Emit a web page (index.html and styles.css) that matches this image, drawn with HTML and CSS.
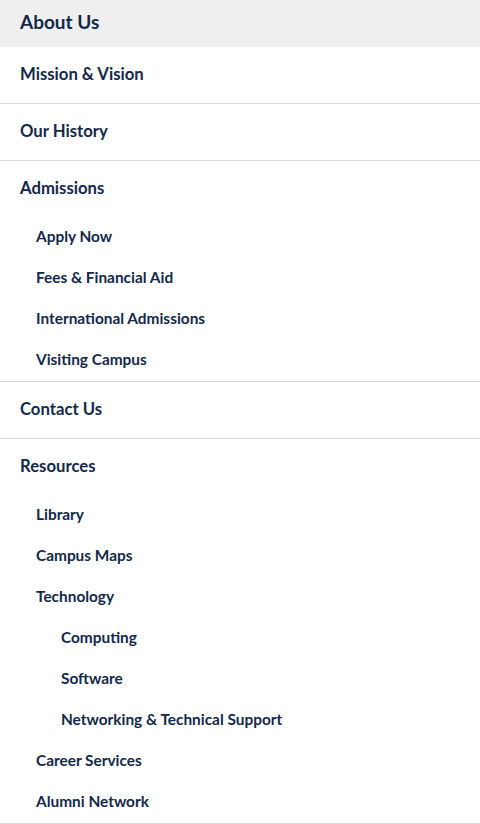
FILE: index.html
```html
<!DOCTYPE html>
<html>
<head>
<meta charset="utf-8">
<link rel="stylesheet" href="styles.css">
</head>
<body>
<nav class="side-nav">
  <div class="nav-header">About Us</div>
  <ul class="nav-list">
    <li class="nav-item"><a class="nav-link">Mission &amp; Vision</a></li>
    <li class="nav-item"><a class="nav-link">Our History</a></li>
    <li class="nav-item">
      <a class="nav-link">Admissions</a>
      <ul class="sub-list">
        <li><a class="sub-link">Apply Now</a></li>
        <li><a class="sub-link">Fees &amp; Financial Aid</a></li>
        <li><a class="sub-link">International Admissions</a></li>
        <li><a class="sub-link">Visiting Campus</a></li>
      </ul>
    </li>
    <li class="nav-item"><a class="nav-link">Contact Us</a></li>
    <li class="nav-item">
      <a class="nav-link">Resources</a>
      <ul class="sub-list">
        <li><a class="sub-link">Library</a></li>
        <li><a class="sub-link">Campus Maps</a></li>
        <li>
          <a class="sub-link">Technology</a>
          <ul class="sub-sub-list">
            <li><a class="sub-link deep">Computing</a></li>
            <li><a class="sub-link deep">Software</a></li>
            <li><a class="sub-link deep">Networking &amp; Technical Support</a></li>
          </ul>
        </li>
        <li><a class="sub-link">Career Services</a></li>
        <li><a class="sub-link">Alumni Network</a></li>
      </ul>
    </li>
  </ul>
</nav>
</body>
</html>
```
FILE: styles.css
```css
* { box-sizing: border-box; }
html, body { margin: 0; padding: 0; background: #fff; }
body {
  font-family: "Lato", "Open Sans", sans-serif;
  color: #13294b;
  -webkit-font-smoothing: antialiased;
}
.side-nav { width: 480px; }
.nav-header {
  background: #efefef;
  height: 47px;
  padding: 0 20px 4px;
  display: flex;
  align-items: center;
  font-size: 19px;
  font-weight: 700;
}
.nav-list, .sub-list, .sub-sub-list {
  list-style: none;
  margin: 0;
  padding: 0;
}
.nav-item { border-bottom: 1px solid #d6d6d6; }
.nav-link {
  display: flex;
  align-items: center;
  height: 56px;
  padding: 0 20px 2px;
  font-size: 16.7px;
  font-weight: 700;
}
.sub-link {
  display: flex;
  align-items: center;
  height: 41px;
  padding: 0 36px 3px;
  font-size: 15.4px;
  font-weight: 700;
}
.sub-link.deep { padding-left: 61px; }
```
